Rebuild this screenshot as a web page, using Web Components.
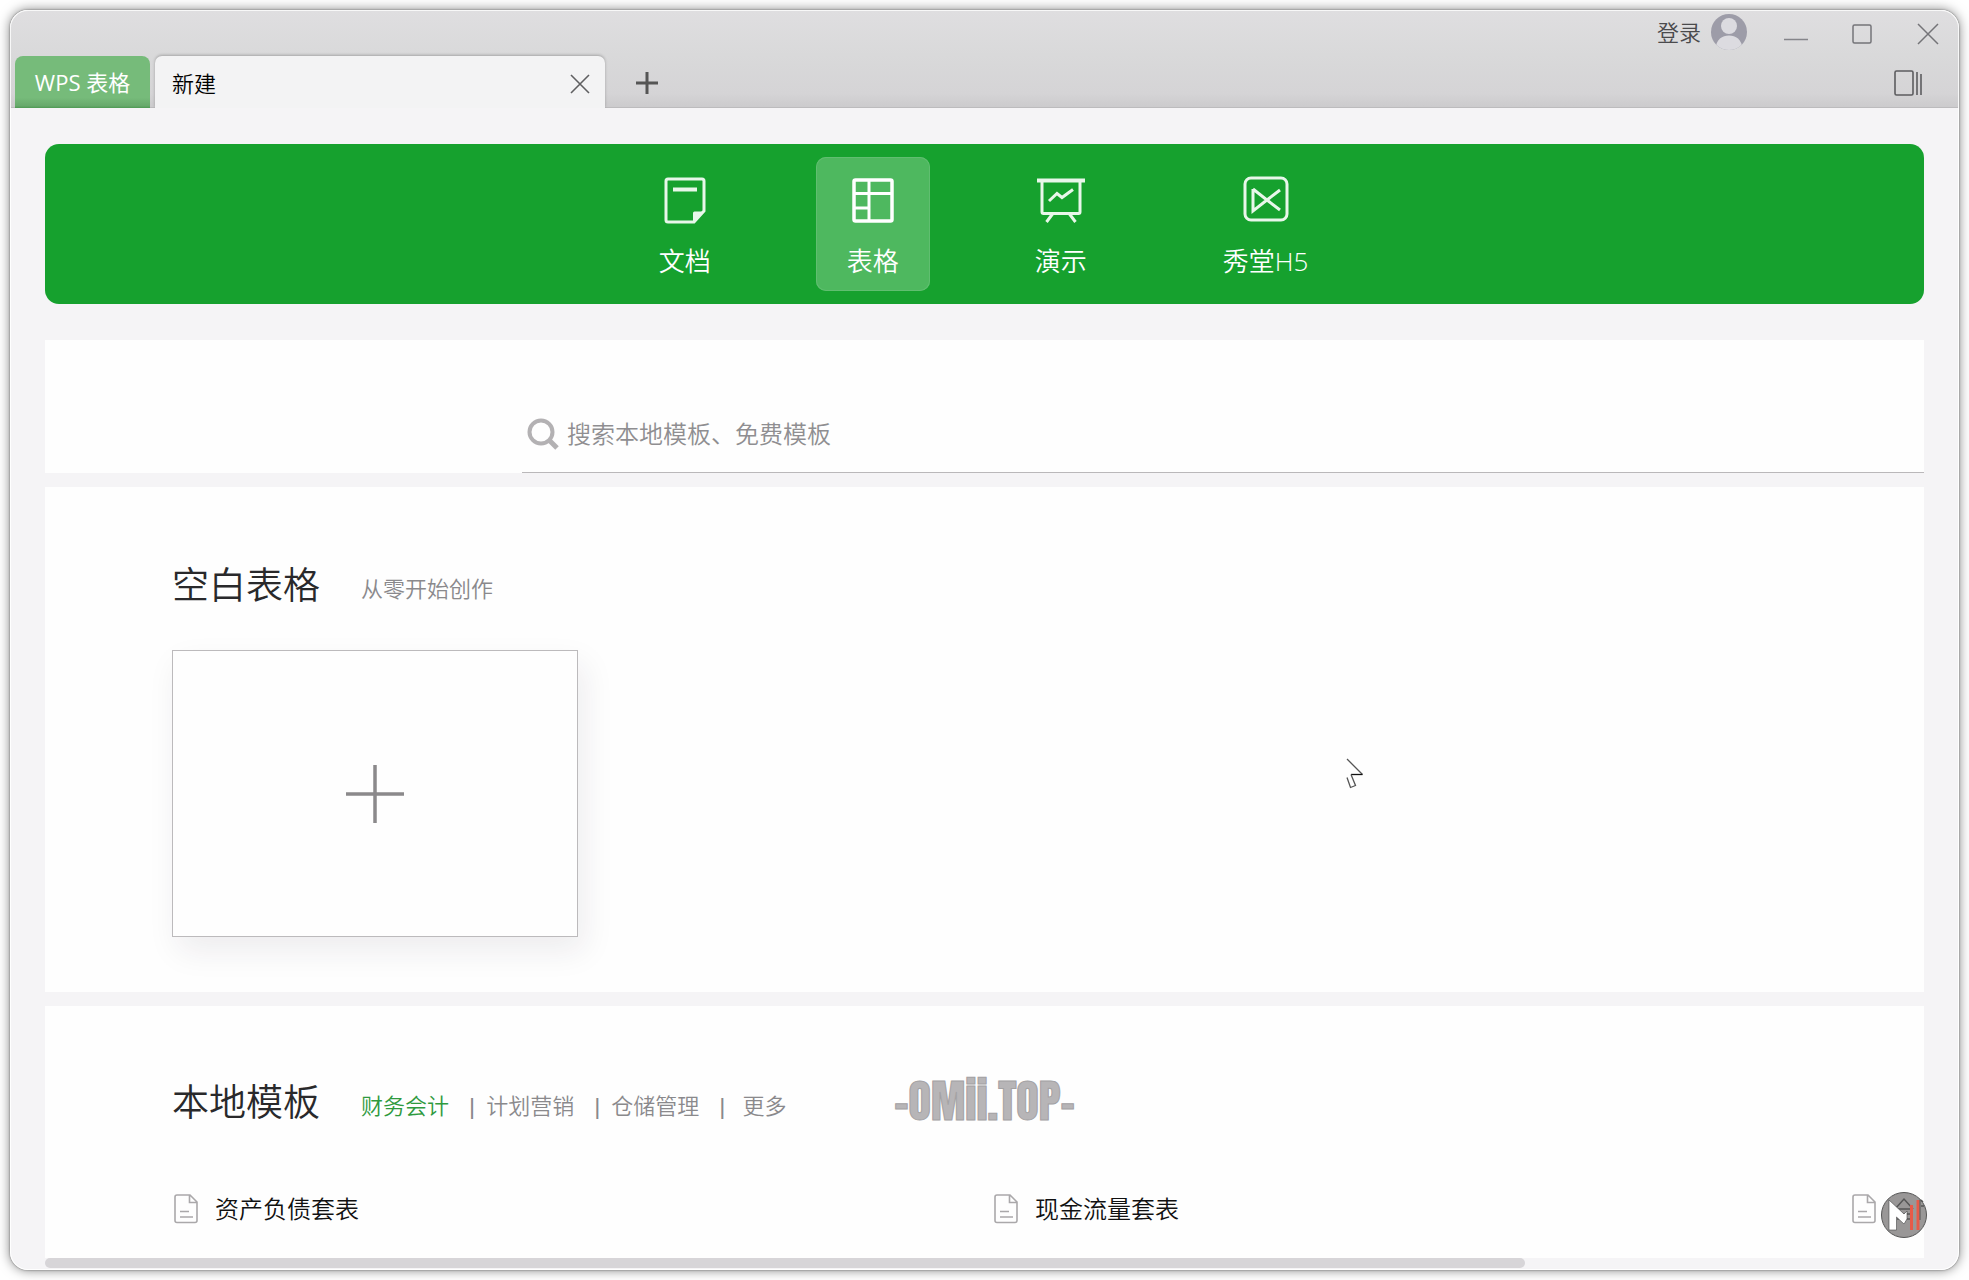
<!DOCTYPE html>
<html lang="zh-CN">
<head>
<meta charset="utf-8">
<title>WPS 表格</title>
<style>
  html, body { margin: 0; height: 100%; }
  body {
    background: #fff;
    color: #1e1e1e;
    font-family: "Open Sans", "Noto Sans CJK SC", sans-serif;
    font-weight: 350;
    overflow: hidden;
  }
</style>
</head>
<body>
<wps-window>
  <title-bar slot="header"></title-bar>
  <type-nav>
    <type-item icon="doc">文档</type-item>
    <type-item icon="sheet" active>表格</type-item>
    <type-item icon="slides">演示</type-item>
    <type-item icon="h5">秀堂H5</type-item>
  </type-nav>
  <search-panel></search-panel>
  <content-panel heading="空白表格">
    <span slot="aside">从零开始创作</span>
    <blank-card></blank-card>
  </content-panel>
  <content-panel heading="本地模板" grow>
    <category-links slot="aside"></category-links>
    <template-list>
      <template-item>资产负债套表</template-item>
      <template-item wide>现金流量套表</template-item>
      <template-item>合</template-item>
    </template-list>
  </content-panel>
  <scroll-strip></scroll-strip>
  <water-mark slot="overlay"></water-mark>
  <site-badge slot="overlay"></site-badge>
  <mouse-pointer slot="overlay"></mouse-pointer>
</wps-window>

<script>
const RESET = `
  * { box-sizing: border-box; }
  button { font: inherit; color: inherit; background: none; border: 0; padding: 0; margin: 0; cursor: pointer; }
  svg { display: block; }
`;

function define(name, css, markup) {
  customElements.define(name, class extends HTMLElement {
    connectedCallback() {
      if (this.shadowRoot) return;
      const html = typeof markup === 'function' ? markup(this) : markup;
      this.attachShadow({ mode: 'open' }).innerHTML = `<style>${RESET}${css}</style>${html}`;
    }
  });
}

/* Window frame */
define('wps-window', `
  :host { display: flex; height: 100vh; padding: 10px; box-sizing: border-box; position: relative; }
  .frame {
    flex: 1; min-width: 0; display: flex; flex-direction: column; overflow: hidden;
    background: #f5f4f6; border-radius: 18px;
    box-shadow: inset 0 0 0 1px #fff, 0 0 2px rgba(0,0,0,.5), 0 0 12px rgba(0,0,0,.5);
  }
  main { flex: 1; min-height: 0; display: flex; flex-direction: column; padding: 36px 35px 2px 35px; }
`, `<div class="frame"><slot name="header"></slot><main><slot></slot></main></div><slot name="overlay"></slot>`);

/* Title bar: account, window buttons, tabs */
define('title-bar', `
  :host { display: block; font-size: 22px; line-height: 32px; background: linear-gradient(#dfdee0, #d9d9da 45%, #d5d4d6 85%, #cbcacc);
    border: 1px solid #f8f8f8; border-width: 1px 1px 0; border-radius: 18px 18px 0 0; box-shadow: inset 0 -1px #bcbbbd; }
  .top, .bottom, .account { display: flex; align-items: center; }
  .top { height: 45px; justify-content: flex-end; gap: 6px; }
  .account { gap: 10px; margin-right: 13px; padding-bottom: 4px; color: #4a4a4c; }
  .win { width: 60px; height: 44px; display: grid; place-items: center; }
  .bottom { height: 52px; padding-left: 4px; }
  .app { height: 52px; padding: 0 18px; color: #fff; font-weight: 400; border-radius: 8px 8px 0 0;
    background: linear-gradient(#76bb7a 80%, #67a96b 96%, #4d9952); margin-right: 5px; min-width: 135px; }
  .tab { width: 450px; height: 52px; padding: 2px 15px 0 17px; display: flex; align-items: center; justify-content: space-between;
    background: #f3f3f4; border-radius: 7px 7px 0 0; box-shadow: 0 -1px 3px rgba(0,0,0,.25); color: #000; clip-path: inset(-4px -4px 0 -4px); }
  .tab button { padding-top: 2px; }
  .add { width: 40px; height: 42px; padding-top: 2px; margin-left: 22px; display: grid; place-items: center; }
  .side { width: 100px; height: 44px; padding-top: 2px; margin-left: auto; display: grid; place-items: center; }
`, `
  <div class="top">
    <button class="account">登录
      <svg width="36" height="36" viewBox="0 0 36 36" fill="none">
        <defs><clipPath id="c"><circle cx="18" cy="18" r="18"/></clipPath></defs>
        <g clip-path="url(#c)"><rect width="36" height="36" fill="#9d9ca8"/>
        <path d="M4 37C5 25 11 21.500 18 21.500S31 25 32 37Z" fill="#dcdbe0"/></g>
        <circle cx="18" cy="12" r="8" fill="#dcdbe0"/>
      </svg>
    </button>
    <button class="win" aria-label="最小化"><svg width="24" height="24" stroke="#85858a" stroke-width="1.500"><path d="M0 17.500H24"/></svg></button>
    <button class="win" aria-label="最大化"><svg width="22" height="22" fill="none" stroke="#747478" stroke-width="1.500"><rect x="2" y="2" width="18" height="18" rx="1.500"/></svg></button>
    <button class="win" aria-label="关闭"><svg width="22" height="22" stroke="#747478" stroke-width="1.500"><path d="M1 1L21 21M21 1L1 21"/></svg></button>
  </div>
  <div class="bottom">
    <button class="app">WPS 表格</button>
    <div class="tab"><span>新建</span>
      <button aria-label="关闭标签"><svg width="20" height="20" stroke="#5f5f61" stroke-width="1.600"><path d="M1 1L19 19M19 1L1 19"/></svg></button></div>
    <button class="add" aria-label="新建标签"><svg width="22" height="22" stroke="#555" stroke-width="3"><path d="M11 0V22M0 11H22"/></svg></button>
    <button class="side" aria-label="侧栏"><svg width="28" height="26" fill="none" stroke="#5c5c5f" stroke-width="1.600"><rect x="1" y="1" width="18" height="24" rx="1.500"/><path d="M23 2V25M27 4V25"/></svg></button>
  </div>
`);

/* Document type banner */
define('type-nav', `
  :host { display: block; flex: none; }
  nav { display: flex; justify-content: center; align-items: center; gap: 74px; height: 160px; padding-right: 2px; border-radius: 14px; background: #16a12e; }
`, `<nav><slot></slot></nav>`);

const TYPE_ICONS = {
  doc: `<path d="M7 4H41Q43 4 43 6V36L33 47H7Q5 47 5 45V6Q5 4 7 4Z"/><path d="M12 14.500H36" stroke-width="4"/><path d="M32 48V38Q32 36.500 33.500 36.500H43.500Z" fill="#e8f7ea" stroke="none"/>`,
  sheet: `<rect x="5" y="5" width="38" height="41" rx="1.500" stroke-width="3.500"/><path d="M20 5V46M5 18.500H43M5 33H20"/>`,
  slides: `<path d="M0 5.500H48" stroke-width="4"/><path d="M5 6V37Q5 38.500 6.500 38.500H41.500Q43 38.500 43 37V6"/><path d="M12 26L20 18.500L25 22.500L36 14.500M15.500 39L9.500 47M32.500 39L38.500 47"/>`,
  h5: `<rect x="3" y="3" width="42" height="42" rx="6"/><path d="M11 14V36L25 25L11 14M25 25L38 15M25 25L38 35"/>`
};
define('type-item', `
  :host { display: block; }
  button { display: flex; flex-direction: column; align-items: center; height: 134px; padding: 18px 31px 0; border-radius: 10px;
    color: #fff; font-size: 26px; line-height: 36px; }
  svg { margin-bottom: 18px; }
  :host([active]) button { background: #4eb85f; box-shadow: inset 0 0 0 1px #60be70; }
  :host([active]) svg { stroke: #fff; }
`, el => `<button><svg width="48" height="50" viewBox="0 0 48 50" fill="none" stroke="#e8f7ea" stroke-width="3">${TYPE_ICONS[el.getAttribute('icon')]}</svg><slot></slot></button>`);

/* Search */
define('search-panel', `
  :host { display: flex; flex: none; margin-top: 36px; height: 133px; background: #fefefe; align-items: flex-end; padding-left: 477px; }
  label { flex: 1; display: flex; align-items: center; gap: 8px; height: 76px; padding: 0 0 2px 5px; border-bottom: 1px solid #bab8ba; }
  input { flex: 1; border: 0; outline: 0; background: none; padding: 0; font: inherit; font-size: 24px; line-height: 36px; height: 36px; }
  input::placeholder { color: #8f8e91; opacity: 1; }
`, `<label>
    <svg width="32" height="32" fill="none" stroke="#b3b1b3" stroke-width="4"><circle cx="14" cy="14" r="11.500"/><path d="M22 22L30 30" stroke-width="5"/></svg>
    <input type="text" placeholder="搜索本地模板、免费模板" aria-label="搜索">
  </label>`);

/* Section with a heading */
define('content-panel', `
  :host { display: block; flex: none; margin-top: 14px; padding: 74px 0 55px 127px; background: #fefefe; overflow: hidden; }
  :host([grow]) { flex: 1 1 0; padding: 72px 0 0 127px; }
  header { display: flex; align-items: center; gap: 41px; margin-bottom: 41px; height: 48px; font-size: 22px; line-height: 48px; color: #8a898c; }
  :host([grow]) header { margin-bottom: 67px; }
  ::slotted([slot="aside"]) { padding-top: 5px; }
  h2 { margin: 0; font-size: 37px; font-weight: 350; color: #29292b; white-space: nowrap; }
`, el => `<header><h2>${el.getAttribute('heading')}</h2><slot name="aside"></slot></header><slot></slot>`);

define('blank-card', `
  :host { display: flex; }
  button { width: 406px; height: 287px; display: grid; place-items: center; background: #fefefe; border: 1px solid #bcbabc;
    box-shadow: 6px 14px 30px rgba(40,30,50,.08); }
`, `<button aria-label="新建空白表格"><svg width="58" height="58" stroke="#8b898b" stroke-width="3.500"><path d="M29 0V58M0 29H58"/></svg></button>`);

define('category-links', `
  :host { display: block; }
  nav { display: flex; }
  a { color: inherit; text-decoration: none; white-space: nowrap; }
  a.on { color: #2f9a3e; }
  a.more { margin-left: 6px; }
  span { margin: 0 8px 0 17px; font-weight: 600; }
`, `<nav><a class="on" href="#finance">财务会计</a><span>|</span><a href="#marketing">计划营销</a><span>|</span><a href="#storage">仓储管理</a><span>|</span><a class="more" href="#more">更多</a></nav>`);

define('template-list', `:host { display: flex; padding-left: 2px; }`, `<slot></slot>`);
define('template-item', `
  :host { display: block; flex: none; width: 820px; }
  :host([wide]) { width: 858px; }
  a { display: flex; align-items: center; gap: 17px; color: #111; text-decoration: none; font-size: 24px; line-height: 32px; white-space: nowrap; }
`, `<a href="#template"><svg width="24" height="30" fill="none" stroke="#aaa8aa" stroke-width="1.600"><path d="M3 1H16L23 8V26.500Q23 28.500 21 28.500H3Q1 28.500 1 26.500V3Q1 1 3 1ZM15.500 1V8.500H23M6 17.500H15M6 23H19"/></svg><slot></slot></a>`);

define('scroll-strip', `
  :host { display: block; flex: none; height: 10px; }
  div { width: 78.75%; height: 10px; border-radius: 5px; background: #d7d5d8; }
`, `<div></div>`);

/* Layers over the window */
define('water-mark', `
  :host { position: absolute; left: 0; right: 0; bottom: 151px; text-align: center; pointer-events: none;
    font: normal 46px/56px Impact, Anton, "Roboto Condensed", "Open Sans Condensed", "Liberation Sans Narrow", "DejaVu Sans Condensed", sans-serif; color: #b7b5b7; -webkit-text-stroke: 1px #a3a1a3; }
`, `-OMii.TOP-`);

define('site-badge', `
  :host { position: absolute; right: 42px; bottom: 42px; pointer-events: none; }
`, `<svg width="46" height="46" viewBox="0 0 46 46">
    <circle cx="23" cy="23" r="22.500" fill="#999797" stroke="#555"/>
    <path d="M14 17L23 7L32 17M15 17H32M16 22H31M16 27H31" fill="none" stroke="#555" stroke-width="1.500"/>
    <path d="M8 8L23 22L26 19V27L23 32L15.500 25V38H8Z" fill="#fff" stroke="#444" stroke-width=".6"/>
    <path d="M30.500 13V38" stroke="#e85a48" stroke-width="3"/><path d="M37 8V38" stroke="#e85a48" stroke-width="3"/><path d="M39 8V28" stroke="#555" stroke-width="1"/><path d="M40 8L42 10M40 14H43" stroke="#555" stroke-width="1.500"/>
  </svg>`);

define('mouse-pointer', `
  :host { position: absolute; left: 1346px; top: 758px; pointer-events: none; }
`, `<svg width="18" height="32" fill="none" stroke="#555" stroke-width="1.300"><path d="M1 1L16.500 16.500"/><path d="M16.500 16.500H5" stroke="#111"/><path d="M5 16.500L9.500 27.500L4.500 29.500L1 19.500"/></svg>`);
</script>
</body>
</html>
